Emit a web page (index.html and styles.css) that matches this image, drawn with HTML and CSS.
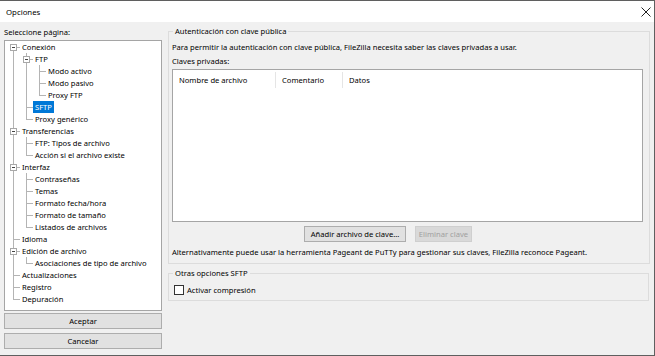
FILE: index.html
```html
<!doctype html>
<html lang="es">
    <head>
        <meta charset="UTF-8" />
        <title>Opciones</title>
        <link rel="stylesheet" href="styles.css">
    </head>
    <body>
        <div class="window">
            <div class="titlebar">
                <span class="title">Opciones</span>
                <svg class="close" width="10" height="10" viewBox="0 0 10 10">
                    <path d="M0.5 0.5 L9.5 9.5 M9.5 0.5 L0.5 9.5" stroke="#222" stroke-width="1" fill="none" />
                </svg>
            </div>

            <div class="content">
                <div class="sidebar">
                    <div class="caption">Seleccione página:</div>
                    <div class="tree-box">
                        <ul class="tree">
                            <li>
                                <span class="toggle"></span><span class="label">Conexión</span>
                                <ul>
                                    <li>
                                        <span class="toggle"></span><span class="label">FTP</span>
                                        <ul>
                                            <li><span class="label">Modo activo</span></li>
                                            <li><span class="label">Modo pasivo</span></li>
                                            <li><span class="label">Proxy FTP</span></li>
                                        </ul>
                                    </li>
                                    <li><span class="label selected">SFTP</span></li>
                                    <li><span class="label">Proxy genérico</span></li>
                                </ul>
                            </li>
                            <li>
                                <span class="toggle"></span><span class="label">Transferencias</span>
                                <ul>
                                    <li><span class="label">FTP: Tipos de archivo</span></li>
                                    <li><span class="label">Acción si el archivo existe</span></li>
                                </ul>
                            </li>
                            <li>
                                <span class="toggle"></span><span class="label">Interfaz</span>
                                <ul>
                                    <li><span class="label">Contraseñas</span></li>
                                    <li><span class="label">Temas</span></li>
                                    <li><span class="label">Formato fecha/hora</span></li>
                                    <li><span class="label">Formato de tamaño</span></li>
                                    <li><span class="label">Listados de archivos</span></li>
                                </ul>
                            </li>
                            <li><span class="label">Idioma</span></li>
                            <li>
                                <span class="toggle"></span><span class="label">Edición de archivo</span>
                                <ul>
                                    <li><span class="label">Asociaciones de tipo de archivo</span></li>
                                </ul>
                            </li>
                            <li><span class="label">Actualizaciones</span></li>
                            <li><span class="label">Registro</span></li>
                            <li><span class="label">Depuración</span></li>
                        </ul>
                    </div>
                    <button class="btn wide">Aceptar</button>
                    <button class="btn wide">Cancelar</button>
                </div>

                <div class="panel">
                    <fieldset class="group auth">
                        <legend>Autenticación con clave pública</legend>
                        <p class="line">Para permitir la autenticación con clave pública, FileZilla necesita saber las claves privadas a usar.</p>
                        <p class="line">Claves privadas:</p>
                        <div class="keys">
                            <div class="keys-head">
                                <span class="col col-name">Nombre de archivo</span>
                                <span class="col col-comment">Comentario</span>
                                <span class="col col-data">Datos</span>
                            </div>
                        </div>
                        <div class="key-actions">
                            <button class="btn">Añadir archivo de clave...</button>
                            <button class="btn" disabled>Eliminar clave</button>
                        </div>
                        <p class="line">Alternativamente puede usar la herramienta Pageant de PuTTy para gestionar sus claves, FileZilla reconoce Pageant.</p>
                    </fieldset>

                    <fieldset class="group other">
                        <legend>Otras opciones SFTP</legend>
                        <label class="check">
                            <span class="box"></span>
                            Activar compresión
                        </label>
                    </fieldset>
                </div>
            </div>
        </div>
    </body>
</html>
```

FILE: styles.css
```css
* {
    margin: 0;
    padding: 0;
    box-sizing: border-box;
}

body {
    font-family: "Noto Sans", "Open Sans", sans-serif;
    font-size: 7.6px;
    color: #000;
    background: #f0f0f0;
    overflow: hidden;
}

.window {
    width: 655px;
    height: 356px;
    border-top: 1px solid #5f5f5f;
    border-right: 1px solid #5f5f5f;
    border-bottom: 1px solid #5f5f5f;
    background: #f0f0f0;
}

.titlebar {
    height: 21px;
    background: #ffffff;
    display: flex;
    align-items: center;
    justify-content: space-between;
    padding: 0 3px 0 6px;
}

.title {
    font-size: 7.8px;
}

.close {
    display: block;
}

.content {
    display: flex;
    gap: 6px;
    padding: 3px 4px 0 4px;
}

/* left column */

.sidebar {
    width: 158px;
    display: flex;
    flex-direction: column;
}

.caption {
    line-height: 14px;
    height: 14px;
}

.tree-box {
    margin-top: 1px;
    height: 271px;
    background: #ffffff;
    border: 1px solid #a5a5a5;
    padding: 0 0 0 8px;
}

.tree,
.tree ul {
    list-style: none;
}

.tree ul {
    margin-left: 6px;
}

.tree li {
    position: relative;
    padding-left: 7px;
    line-height: 12px;
}

.tree li::before {
    content: "";
    position: absolute;
    left: 0;
    top: 0;
    width: 6px;
    height: 6px;
    border-left: 1px solid #b4b4b4;
    border-bottom: 1px solid #b4b4b4;
}

.tree li:not(:last-child)::after {
    content: "";
    position: absolute;
    left: 0;
    top: 6px;
    bottom: 0;
    border-left: 1px solid #b4b4b4;
}

.tree > li:first-child::before {
    border-left-color: transparent;
}

.toggle {
    position: absolute;
    left: -3px;
    top: 3px;
    width: 7px;
    height: 7px;
    border: 1px solid #a8a8a8;
    background: #ffffff;
    z-index: 1;
}

.toggle::after {
    content: "";
    position: absolute;
    left: 1px;
    right: 1px;
    top: 2px;
    height: 1px;
    background: #444;
}

.label {
    display: inline-block;
    padding: 0 2px;
    white-space: nowrap;
}

.label.selected {
    background: #0078d7;
    color: #ffffff;
}

.btn {
    font-family: inherit;
    font-size: 7.6px;
    color: #000;
    background: #e1e1e1;
    border: 1px solid #adadad;
    height: 16px;
    padding: 0;
    white-space: nowrap;
}

.btn:disabled {
    background: #d9d9d9;
    border-color: #cfcfcf;
    color: #a0a0a0;
}

.btn.wide {
    width: 100%;
    margin-top: 2px;
}

.btn.wide + .btn.wide {
    margin-top: 4px;
}

/* right column */

.panel {
    flex: 1;
    display: flex;
    flex-direction: column;
}

.group {
    border: 1px solid #dcdcdc;
    padding: 0 3px 0 3px;
}

.group legend {
    line-height: 12px;
    padding: 0 2px;
    margin-left: 1px;
}

.auth {
    height: 239px;
}

.line {
    line-height: 12px;
    white-space: nowrap;
}

.auth .line:first-of-type {
    margin-top: 4px;
}

.auth .line + .line {
    margin-top: 2px;
}

.keys {
    margin: 2px 3px 0 0;
    height: 153px;
    background: #ffffff;
    border: 1px solid #a5a5a5;
}

.keys-head {
    display: flex;
    height: 19px;
    align-items: center;
}

.col {
    padding-left: 6px;
    line-height: 16px;
}

.col-name {
    width: 103px;
    border-right: 1px solid #e5e5e5;
}

.col-comment {
    width: 67px;
    border-right: 1px solid #e5e5e5;
}

.key-actions {
    display: flex;
    gap: 9px;
    padding-left: 132px;
    margin-top: 4px;
}

.key-actions .btn:first-child {
    width: 102px;
}

.key-actions .btn:last-child {
    width: 57px;
}

.auth .key-actions + .line {
    margin-top: 4px;
}

.other {
    margin-top: 3px;
    height: 34px;
    margin-right: 1px;
}

.check {
    display: flex;
    align-items: center;
    gap: 3px;
    margin-top: 5px;
    margin-left: 2px;
    line-height: 12px;
}

.box {
    width: 10px;
    height: 10px;
    border: 1px solid #333;
    background: #ffffff;
}
```
